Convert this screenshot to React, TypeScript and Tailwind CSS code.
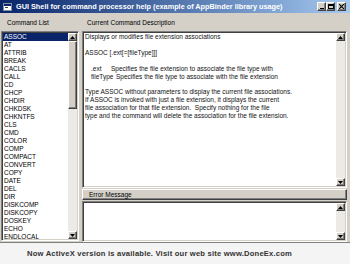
import React from "react";

const commands = [
  "ASSOC", "AT", "ATTRIB", "BREAK", "CACLS", "CALL", "CD", "CHCP", "CHDIR",
  "CHKDSK", "CHKNTFS", "CLS", "CMD", "COLOR", "COMP", "COMPACT", "CONVERT",
  "COPY", "DATE", "DEL", "DIR", "DISKCOMP", "DISKCOPY", "DOSKEY", "ECHO", "ENDLOCAL",
];

// sunken win-classic frame
const sunken =
  "border border-t-[#808080] border-l-[#808080] border-r-white border-b-white shadow-[inset_1px_1px_0_#404040,inset_-1px_-1px_0_#d4d0c8]";
const raised =
  "bg-[#d4d0c8] border border-t-white border-l-white border-r-[#404040] border-b-[#404040] shadow-[inset_-1px_-1px_0_#808080]";

const Arrow = ({ up }: { up?: boolean }) => (
  <div className={`${raised} w-[9px] h-[8px] flex items-center justify-center`}>
    <svg width="5" height="3" viewBox="0 0 5 3">
      {up ? <polygon points="2.5,0 5,3 0,3" fill="#000" /> : <polygon points="0,0 5,0 2.5,3" fill="#000" />}
    </svg>
  </div>
);

const ScrollBar = ({ thumb }: { thumb?: boolean }) => (
  <div className="w-[9px] h-full flex flex-col bg-[#ebeae6]">
    <Arrow up />
    <div className="flex-1 flex flex-col">
      {thumb && <div className={`${raised} h-[68px]`} />}
    </div>
    <Arrow />
  </div>
);

const WinButton = ({ children }: { children: React.ReactNode }) => (
  <div className={`${raised} w-[9px] h-[9px] flex items-center justify-center`}>{children}</div>
);

export default function App() {
  return (
    <div className="w-[350px] h-[264px] bg-[#f4f4f4] flex flex-col font-['Liberation_Sans',Arial,sans-serif] overflow-hidden">
      <div className="h-[243px] bg-[#d4d0c8] flex flex-col border-b border-[#808080]">
        {/* title bar */}
        <div className="h-[13px] flex items-center bg-gradient-to-r from-[#0a246a] to-[#a6caf0] px-[2px]">
          <svg width="9" height="9" viewBox="0 0 9 9" className="mr-[4px] ml-[1px]">
            <rect x="0.5" y="1.5" width="8" height="7" fill="#fff" stroke="#8090a0" />
            <rect x="1" y="2" width="7" height="2" fill="#0a246a" />
            <rect x="2" y="5" width="3" height="1" fill="#404040" />
          </svg>
          <span className="text-white font-bold text-[7.3px] leading-none whitespace-nowrap">
            GUI Shell for command processor help (example of AppBinder library usage)
          </span>
          <div className="ml-auto flex items-center mr-[2px]">
            <WinButton>
              <div className="w-[4px] h-[1px] bg-black mt-[4px]" />
            </WinButton>
            <WinButton>
              <div className="w-[6px] h-[5px] border border-black border-t-2" />
            </WinButton>
            <div className="w-[2px]" />
            <WinButton>
              <svg width="5" height="5" viewBox="0 0 5 5">
                <path d="M0 0L5 5M5 0L0 5" stroke="#000" strokeWidth="1.2" />
              </svg>
            </WinButton>
          </div>
        </div>

        {/* body */}
        <div className="flex-1 flex px-[1px] gap-[3px] text-[6.5px] text-black">
          <div className="w-[78px] flex flex-col">
            <div className="h-[18px] flex items-center pl-[6px] pt-[2px]">Command List</div>
            <div className={`${sunken} bg-white h-[210px] flex p-[1px]`}>
              <div className="flex-1 flex flex-col leading-[8px] overflow-hidden">
                {commands.map((c, i) => (
                  <div
                    key={c}
                    className={`h-[8px] pl-[1px] ${i === 0 ? "bg-[#0a246a] text-white" : ""}`}
                  >
                    {c}
                  </div>
                ))}
              </div>
              <ScrollBar thumb />
            </div>
          </div>

          <div className="w-[265px] flex flex-col">
            <div className="h-[18px] flex items-center pl-[5px] pt-[2px]">Current Command Description</div>
            <div className={`${sunken} bg-white h-[157px] flex p-[1px]`}>
              <div className="flex-1 leading-[7.9px] pl-[1px] text-[#111]">
                <div>Displays or modifies file extension associations</div>
                <div className="h-[7.9px]" />
                <div>ASSOC [.ext[=[fileType]]]</div>
                <div className="h-[7.9px]" />
                <div className="pl-[6px] whitespace-nowrap">
                  <span className="inline-block w-[20px]">.ext</span>Specifies the file extension to associate the file type with
                </div>
                <div className="pl-[6px] whitespace-nowrap">
                  <span className="inline-block w-[25px]">fileType</span>Specifies the file type to associate with the file extension
                </div>
                <div className="h-[7.9px]" />
                <div>Type ASSOC without parameters to display the current file associations.</div>
                <div>If ASSOC is invoked with just a file extension, it displays the current</div>
                <div>file association for that file extension.&nbsp; Specify nothing for the file</div>
                <div>type and the command will delete the association for the file extension.</div>
              </div>
              <ScrollBar />
            </div>
            <div className={`${raised} h-[11px] mt-[1px] flex items-center pl-[6px]`}>Error Message</div>
            <div className={`${sunken} bg-white h-[41px] mt-[1px] flex p-[1px]`}>
              <div className="flex-1" />
              <ScrollBar />
            </div>
          </div>
        </div>
      </div>

      <div className="flex-1 flex items-center pl-[27px] text-[7.6px] font-bold text-[#333] tracking-[0.2px]">
        Now ActiveX version is available. Visit our web site www.DoneEx.com
      </div>
    </div>
  );
}
